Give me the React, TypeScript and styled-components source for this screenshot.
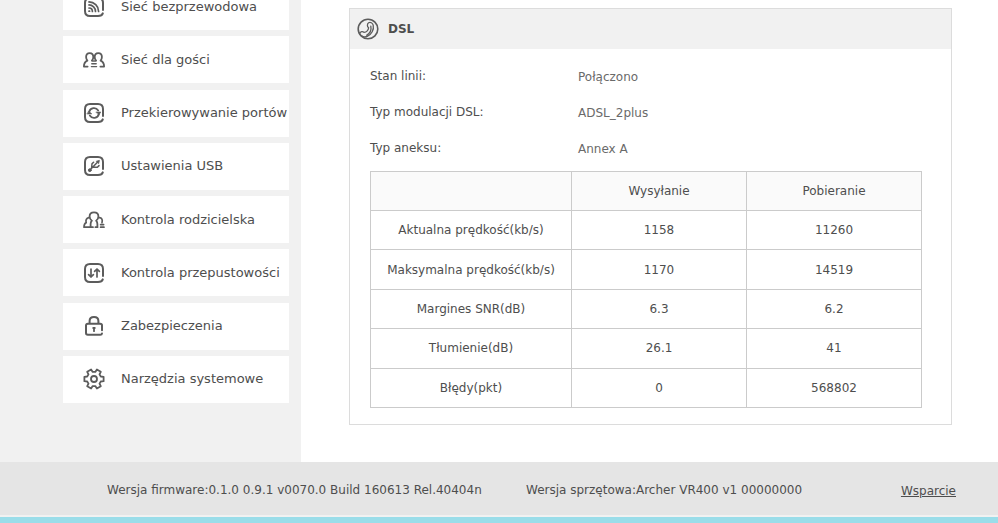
import React from "react";
import styled, { createGlobalStyle } from "styled-components";

const GlobalStyle = createGlobalStyle`
  * { box-sizing: border-box; }
  body {
    margin: 0;
    background: #fff;
    color: #4e4e4e;
    font-family: Verdana, "DejaVu Sans", sans-serif;
    font-size: 12px;
    line-height: 16px;
    overflow: hidden;
  }
`;

const Page = styled.div`
  display: flex;
  flex-direction: column;
`;

const Columns = styled.div`
  display: flex;
`;

const Sidebar = styled.aside`
  display: flex;
  flex: none;
  width: 301px;
  padding: 0 12px 59px 63px;
  background: #f1f1f1;
`;

const Menu = styled.nav`
  display: flex;
  flex: 1;
  flex-direction: column;
  justify-content: space-between;
  min-width: 0;
  margin-top: -17px;
`;

const MenuLink = styled.a`
  display: flex;
  align-items: center;
  gap: 16px;
  height: 47px;
  padding-left: 20px;
  background: #fff;
  color: #4e4e4e;
  font-size: 13px;
  text-decoration: none;
  white-space: nowrap;
`;

const Icon = styled.svg`
  flex: none;
  width: 22px;
  height: 22px;
  fill: none;
  stroke: #5c5c5c;
  stroke-width: 2;
  stroke-linecap: round;
  stroke-linejoin: round;
`;

const Content = styled.main`
  flex: 1;
  min-width: 0;
  padding: 8px 46px 37px 48px;
`;

const Panel = styled.section`
  border: 1px solid #dcdcdc;
`;

const PanelHeader = styled.header`
  display: flex;
  align-items: center;
  gap: 9px;
  height: 40px;
  padding-left: 7px;
  background: #f1f1f1;
`;

const PanelTitle = styled.h2`
  margin: 0;
  font-size: 12px;
  line-height: 16px;
`;

const PanelBody = styled.div`
  padding: 9px 29px 16px 20px;
`;

const Facts = styled.dl`
  margin: 0 0 5px;
`;

const Fact = styled.div`
  display: flex;
  align-items: center;
  height: 36px;
`;

const FactLabel = styled.dt`
  flex: none;
  width: 208px;
`;

const FactValue = styled.dd`
  margin: 0;
  padding-top: 2px;
  color: #6a6a6a;
`;

const Table = styled.table`
  width: 100%;
  height: 237px;
  border-collapse: collapse;
  table-layout: fixed;
`;

const Cell = styled.td`
  height: 39px;
  padding: 0;
  border: 1px solid #cbcbcb;
  text-align: center;
`;

const HeadCell = styled(Cell).attrs({ as: "th" })<{ $wide?: boolean }>`
  width: ${(p) => (p.$wide ? "201px" : "auto")};
  background: #fafafa;
  font-weight: normal;
`;

const RowHead = styled(Cell).attrs({ as: "th" })`
  font-weight: normal;
`;

const Footer = styled.footer`
  display: flex;
  align-items: center;
  height: 53px;
  padding: 2px 42px 0 107px;
  background: #e5e5e5;
`;

const Firmware = styled.span`
  width: 419px;
`;

const Support = styled.a`
  margin-left: auto;
  padding-top: 2px;
  color: #4e4e4e;
`;

const Strip = styled.div`
  height: 8px;
  border-top: 2px solid #f1f1f1;
  background: #9adde9;
`;

const Frame = () => (
  <path d="M20 14V7c0-3.200-1.800-5-5-5H7C3.800 2 2 3.800 2 7v8c0 3.200 1.800 5 5 5h8c2.600 0 4.200-.8 4.800-2.600" />
);

const icons = {
  wifi: (
    <>
      <Frame />
      <path strokeWidth="1.7" d="M6 15.200h.6M6 12c2 0 3.400 1.400 3.400 3.400M6 8.900c3.600 0 6.500 2.900 6.500 6.500M6 5.900c5.200 0 9.600 4.300 9.600 9.500" />
    </>
  ),
  guests: (
    <>
      <path
        strokeWidth="1.8"
        d="M4.600 17.600H.9c0-3.400.9-4.800 3.500-5.900C3.500 10.700 3.100 9.500 3.100 8.100c0-2.400 1.500-4 3.600-4s3.600 1.600 3.600 3.800c0 1.600-.5 2.900-1.400 3.800M17.400 17.600h3.700c0-3.400-.9-4.800-3.500-5.900.9-1 1.300-2.200 1.300-3.600 0-2.400-1.500-4-3.600-4s-3.600 1.600-3.600 3.800c0 1.600.5 2.900 1.400 3.800"
      />
      <path strokeWidth="1.4" d="M9.600 12h2.800M8.800 14.800h4.400M8.400 17.600h5.200" />
    </>
  ),
  forward: (
    <>
      <Frame />
      <path strokeWidth="1.8" d="M6.200 9.800a5 5 0 0 1 9-1.400M15.800 12.200a5 5 0 0 1-9 1.400" />
      <path fill="#5c5c5c" strokeWidth=".6" d="M13.200 10h4.600L16 12.800zM4.200 12h4.600L6 9.200z" />
    </>
  ),
  usb: (
    <>
      <Frame />
      <path strokeWidth="1.500" d="M6.400 15.600l8.800-9M8.600 13l.4-4.200 1.600-1.600M10 12.200h4.400l1.600-1.600" />
      <circle cx="6.800" cy="15.200" r="1.400" fill="#5c5c5c" strokeWidth="1" />
      <path fill="#5c5c5c" strokeWidth=".8" d="M13.600 6.200l2.800-.8-.7 2.900z" />
    </>
  ),
  parental: (
    <>
      <path
        strokeWidth="1.8"
        d="M7.600 18.200V15c0-1.400.4-2.400 1.300-3.300C7.400 10.900 6.600 9.400 6.600 7.600 6.600 5 8.300 3.400 11 3.400S15.400 5 15.400 7.600c0 1.800-.8 3.300-2.300 4.100.9.900 1.300 1.900 1.300 3.300v3.200"
      />
      <path
        strokeWidth="1.7"
        d="M10 18.200H1c0-2.600.5-3.900 2.200-4.600-.8-2.400.3-4.600 2.600-4.900M12.400 18.200h2M16.400 8.700c2.400.2 3.400 2.200 2.600 4.900M17.600 15.600h3M17.600 18.200h3.400"
      />
    </>
  ),
  bandwidth: (
    <>
      <Frame />
      <path strokeWidth="1.700" d="M8 7v8M5.600 12.600L8 15l2.400-2.400M14 15V7M11.600 9.400L14 7l2.400 2.400" />
    </>
  ),
  lock: (
    <>
      <path d="M6.600 8.800V6c0-2.600 1.800-4 4.400-4s4.400 1.400 4.400 4v2.800M19 15.200v-4.600c0-1.200-.6-1.800-1.800-1.800H4.800c-1.200 0-1.800.6-1.800 1.800V18c0 1.200.6 1.800 1.800 1.800h12.400c1.100 0 1.700-.5 1.800-1.400" />
      <path strokeWidth="1.800" d="M11 13v3.200M10.200 13h1.600" />
    </>
  ),
  gear: (
    <>
      <circle cx="11" cy="11" r="3" strokeWidth="1.800" />
      <path
        strokeWidth="1.800"
        d="M17.800 8.500l2.800.3v4.400l-2.800.3-1.300 2.100 1.300 2.600-3.900 2.300-1.600-2.400H9.700l-1.600 2.400-3.900-2.300 1.300-2.600-1.300-2.100-2.800-.3V8.800l2.800-.3 1.300-2.100-1.300-2.600 3.900-2.300 1.600 2.400h2.600l1.600-2.400 3.900 2.300-1.300 2.600z"
      />
    </>
  ),
  phone: (
    <>
      <circle cx="11" cy="11" r="9.800" strokeWidth="1.600" />
      <path
        strokeWidth="1.300"
        d="M2.400 15.600c1.400-2.200 3.200-2.600 4.600-1.200 2.600-.2 4.600-2.400 4.600-4.600-1.600-1.400-1.600-3.800 0-5 1.800-1 4 .2 4.600 2.400 1 4.400-1.600 9.200-6 11.200-2 .8-4 .6-5.600-.6M9.600 17.200c3.400-1.800 5-5.200 4.200-9"
      />
    </>
  ),
};

const menu: { label: string; icon: keyof typeof icons }[] = [
  { label: "Sieć bezprzewodowa", icon: "wifi" },
  { label: "Sieć dla gości", icon: "guests" },
  { label: "Przekierowywanie portów", icon: "forward" },
  { label: "Ustawienia USB", icon: "usb" },
  { label: "Kontrola rodzicielska", icon: "parental" },
  { label: "Kontrola przepustowości", icon: "bandwidth" },
  { label: "Zabezpieczenia", icon: "lock" },
  { label: "Narzędzia systemowe", icon: "gear" },
];

const facts = [
  ["Stan linii:", "Połączono"],
  ["Typ modulacji DSL:", "ADSL_2plus"],
  ["Typ aneksu:", "Annex A"],
];

const rows = [
  ["Aktualna prędkość(kb/s)", "1158", "11260"],
  ["Maksymalna prędkość(kb/s)", "1170", "14519"],
  ["Margines SNR(dB)", "6.3", "6.2"],
  ["Tłumienie(dB)", "26.1", "41"],
  ["Błędy(pkt)", "0", "568802"],
];

export default function App() {
  return (
    <Page>
      <GlobalStyle />
      <Columns>
        <Sidebar>
          <Menu>
            {menu.map((item) => (
              <MenuLink key={item.label} href="#">
                <Icon viewBox="0 0 22 22" aria-hidden="true">
                  {icons[item.icon]}
                </Icon>
                {item.label}
              </MenuLink>
            ))}
          </Menu>
        </Sidebar>
        <Content>
          <Panel>
            <PanelHeader>
              <Icon viewBox="0 0 22 22" aria-hidden="true">
                {icons.phone}
              </Icon>
              <PanelTitle>DSL</PanelTitle>
            </PanelHeader>
            <PanelBody>
              <Facts>
                {facts.map(([label, value]) => (
                  <Fact key={label}>
                    <FactLabel>{label}</FactLabel>
                    <FactValue>{value}</FactValue>
                  </Fact>
                ))}
              </Facts>
              <Table>
                <thead>
                  <tr>
                    <HeadCell $wide />
                    <HeadCell scope="col">Wysyłanie</HeadCell>
                    <HeadCell scope="col">Pobieranie</HeadCell>
                  </tr>
                </thead>
                <tbody>
                  {rows.map(([name, up, down]) => (
                    <tr key={name}>
                      <RowHead scope="row">{name}</RowHead>
                      <Cell>{up}</Cell>
                      <Cell>{down}</Cell>
                    </tr>
                  ))}
                </tbody>
              </Table>
            </PanelBody>
          </Panel>
        </Content>
      </Columns>
      <Footer>
        <Firmware>Wersja firmware:0.1.0 0.9.1 v0070.0 Build 160613 Rel.40404n</Firmware>
        <span>Wersja sprzętowa:Archer VR400 v1 00000000</span>
        <Support href="#">Wsparcie</Support>
      </Footer>
      <Strip />
    </Page>
  );
}
